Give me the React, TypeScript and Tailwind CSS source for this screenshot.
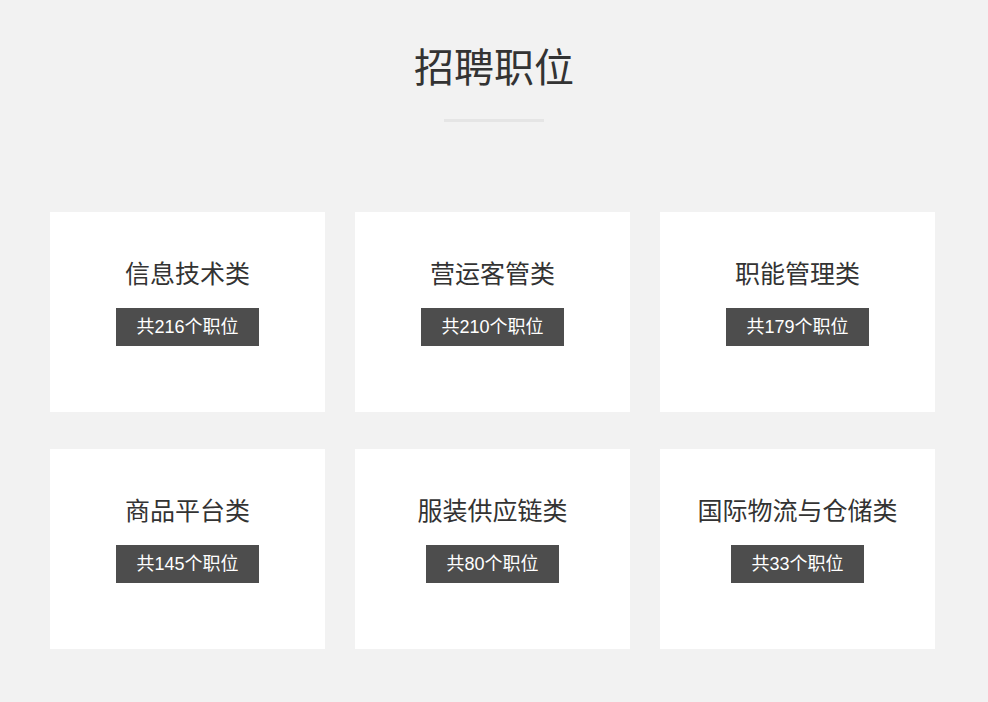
const categories = [
  { name: "信息技术类", count: 216 },
  { name: "营运客管类", count: 210 },
  { name: "职能管理类", count: 179 },
  { name: "商品平台类", count: 145 },
  { name: "服装供应链类", count: 80 },
  { name: "国际物流与仓储类", count: 33 },
];

function CategoryCard({ name, count }: { name: string; count: number }) {
  return (
    <div className="h-[200px] bg-white flex flex-col items-center pt-[48px]">
      <h3 className="text-[25px] leading-[28px] text-[#333]">{name}</h3>
      <span className="mt-[20px] h-[38px] leading-[38px] px-[20px] bg-[#4d4d4d] text-[18px] text-white">
        共{count}个职位
      </span>
    </div>
  );
}

export default function App() {
  return (
    <div
      className="min-h-[702px] bg-[#f2f2f2] pt-[48px] pb-[53px]"
      style={{ fontFamily: '"Liberation Sans", "Noto Sans CJK SC", sans-serif' }}
    >
      <h2 className="text-center text-[40px] leading-[40px] text-[#333]">招聘职位</h2>
      <div className="mx-auto mt-[31px] h-[3px] w-[100px] bg-[#e5e5e5]" />

      <div className="mt-[90px] px-[50px] grid grid-cols-[275px_275px_275px] gap-x-[30px] gap-y-[37px]">
        {categories.map((c) => (
          <CategoryCard key={c.name} name={c.name} count={c.count} />
        ))}
      </div>
    </div>
  );
}
